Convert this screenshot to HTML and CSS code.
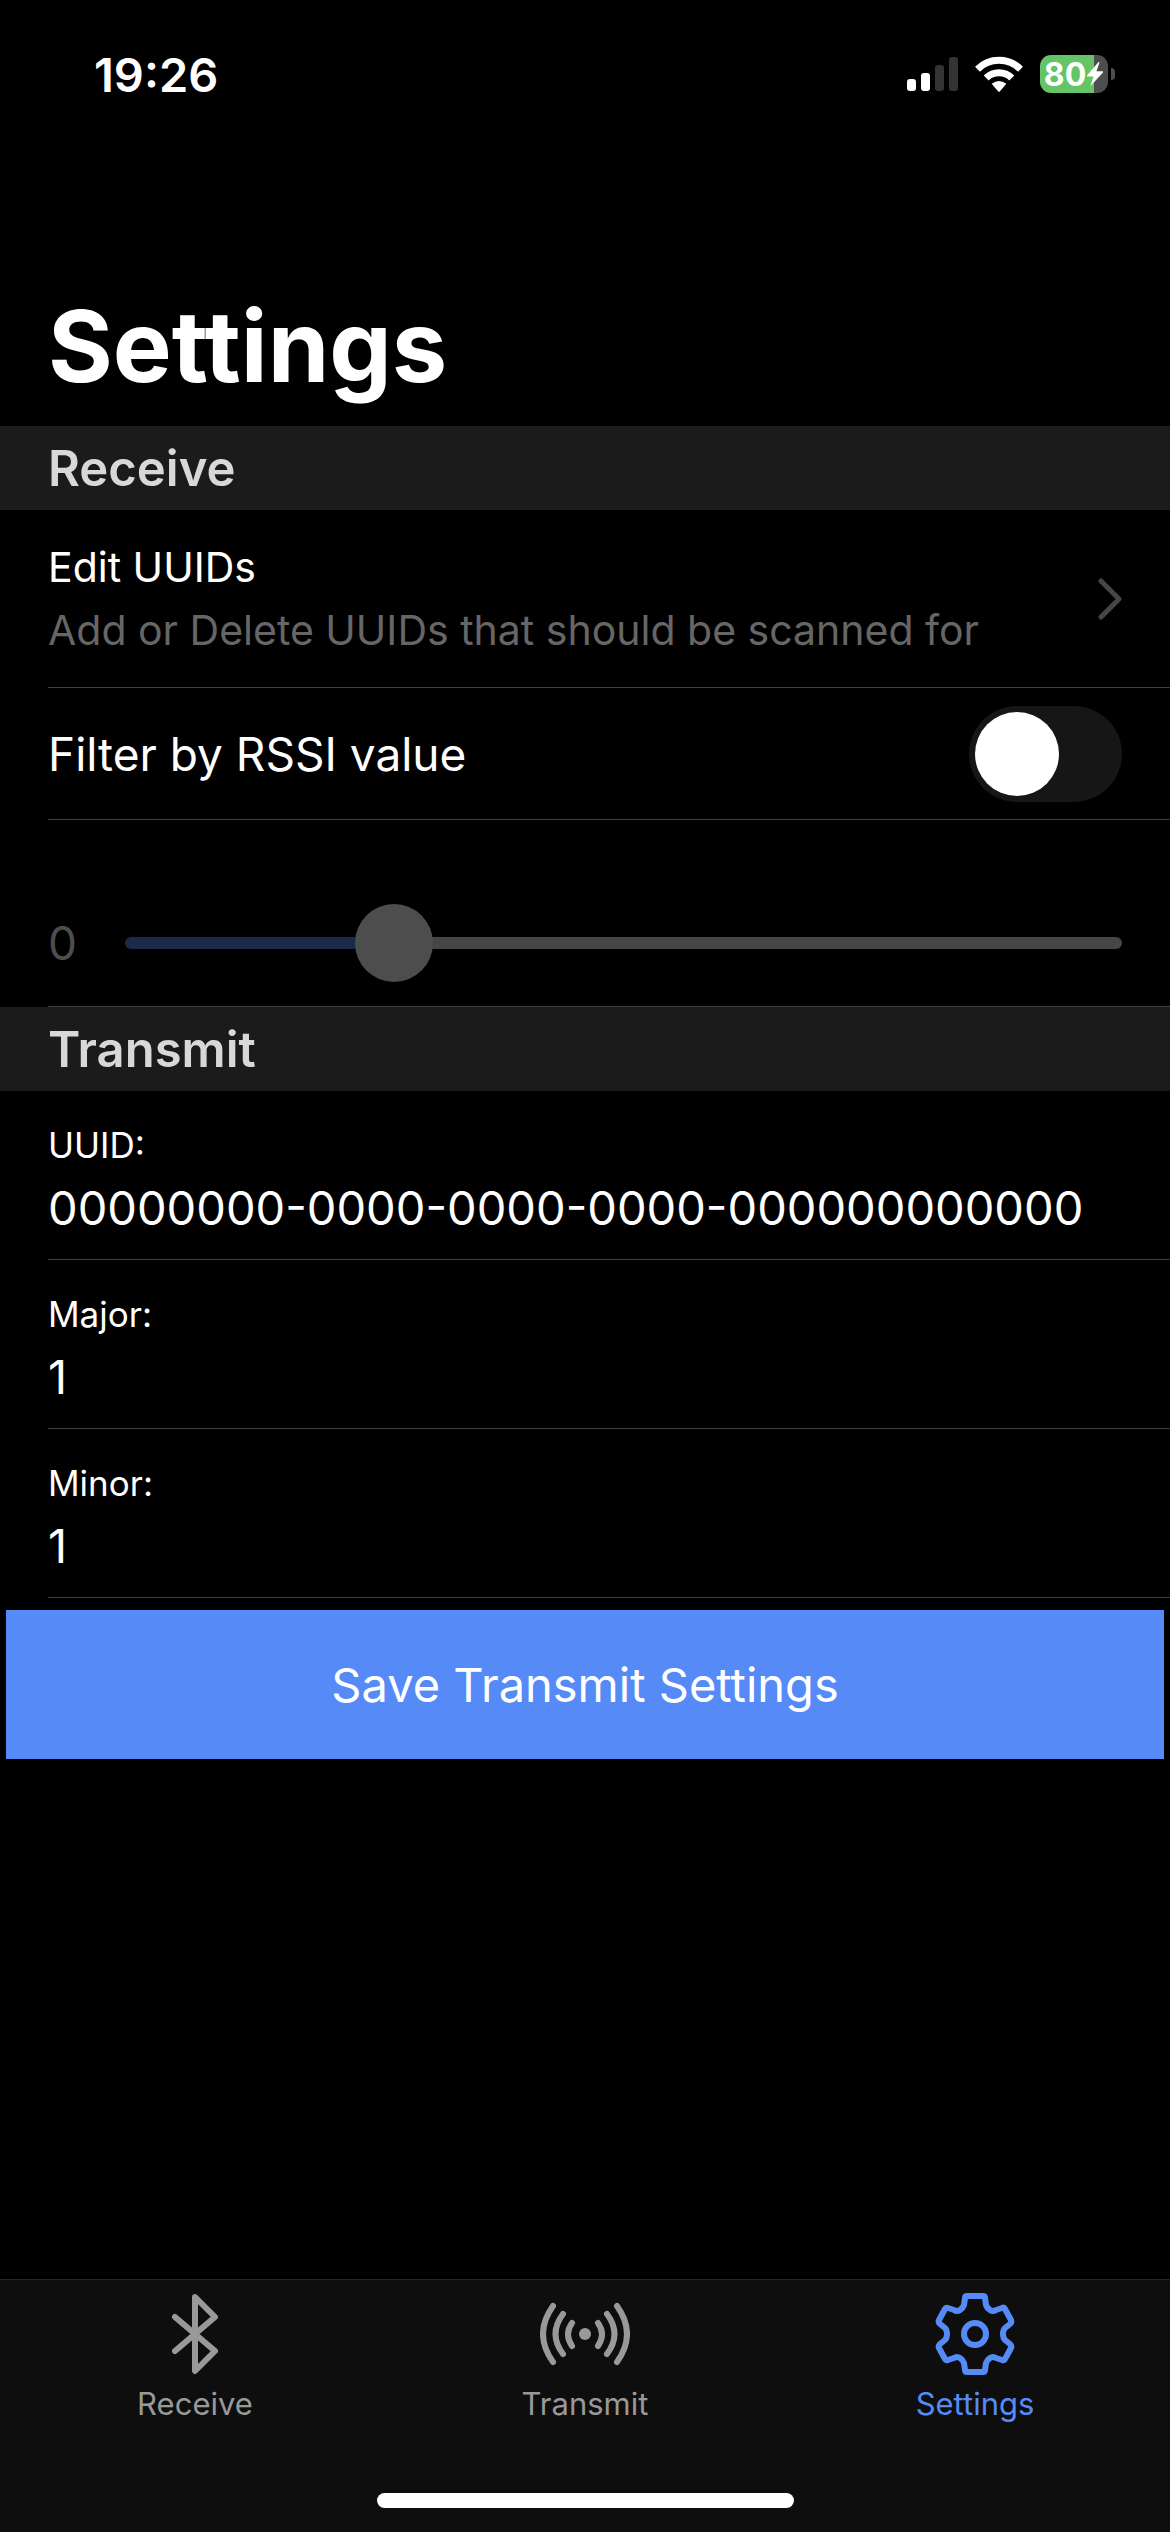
FILE: index.html
```html
<!DOCTYPE html>
<html lang="en">
<head>
<meta charset="utf-8">
<meta name="viewport" content="width=device-width, initial-scale=1">
<title>Settings</title>
<link rel="stylesheet" href="styles.css">
</head>
<body>
<div class="status-bar">
  <span class="clock">19:26</span>
  <div class="indicators">
    <svg class="signal" width="52" height="34" viewBox="0 0 52 34" aria-hidden="true">
      <g fill="#fff"><rect y="22" width="9" height="12" rx="3"/><rect x="14" y="16" width="9" height="18" rx="3"/></g>
      <g fill="#333"><rect x="28" y="8" width="9" height="26" rx="3"/><rect x="42" width="9" height="34" rx="3"/></g>
    </svg>
    <svg class="wifi" width="50" height="38" viewBox="0 0 50 38" aria-hidden="true">
      <g fill="none" stroke="#fff" stroke-width="7">
        <path d="M3.500 14.200A30.500 30.500 0 0 1 46.500 14.200"/>
        <path d="M12.200 23A18.500 18.500 0 0 1 37.800 23"/>
      </g>
      <path fill="#fff" d="M17.700 28.800Q25 23.200 32.300 28.800L26 36.200Q25 37.200 24 36.200Z"/>
    </svg>
    <div class="battery">
      <div class="battery-body"><span>80</span>
        <svg width="18" height="26" viewBox="0 0 18 26" aria-hidden="true"><path fill="#fff" d="M12.500 1L1 14.500Q0.500 15.500 1.700 15.500H7.500L4.500 25L17 11.500Q17.500 10.300 16.300 10.300H10.500L13.500 1.500Z"/></svg>
      </div>
      <span class="battery-tip"></span>
    </div>
  </div>
</div>
<main class="content">
  <h1 class="title">Settings</h1>
  <section>
    <h2 class="section-header">Receive</h2>
    <a class="row link-row" href="#uuids">
      <span class="link-text"><span class="link-title">Edit UUIDs</span><span class="link-detail">Add or Delete UUIDs that should be scanned for</span></span>
      <svg width="26" height="44" viewBox="0 0 26 44" aria-hidden="true"><path d="M5 4L23 22L5 40" fill="none" stroke="#464646" stroke-width="5" stroke-linecap="round" stroke-linejoin="round"/></svg>
    </a>
    <div class="row switch-row">
      <label for="rssi-filter">Filter by RSSI value</label>
      <input class="switch" id="rssi-filter" type="checkbox" role="switch">
    </div>
    <div class="row slider-row">
      <label for="rssi">0</label>
      <input class="slider" id="rssi" type="range" min="0" max="100" value="25" disabled>
    </div>
  </section>
  <form>
    <h2 class="section-header">Transmit</h2>
    <div class="row field-row"><label for="uuid">UUID:</label><input id="uuid" type="text" value="00000000-0000-0000-0000-000000000000"></div>
    <div class="row field-row"><label for="major">Major:</label><input id="major" type="text" value="1"></div>
    <div class="row field-row"><label for="minor">Minor:</label><input id="minor" type="text" value="1"></div>
    <button class="save" type="button">Save Transmit Settings</button>
  </form>
</main>
<footer class="tab-bar">
  <nav class="tabs">
    <a class="tab" href="#receive">
      <svg width="90" height="84" viewBox="0 0 90 84" fill="none" stroke="currentColor" stroke-width="6" stroke-linecap="round" stroke-linejoin="round" aria-hidden="true"><path d="M25 25L65 59L45 79V5L65 25L25 59"/></svg>
      Receive</a>
    <a class="tab" href="#transmit">
      <svg width="90" height="84" viewBox="0 0 90 84" fill="none" stroke="currentColor" stroke-width="6" stroke-linecap="round" aria-hidden="true">
        <circle cx="45" cy="42" r="6" fill="currentColor" stroke="none"/>
        <path d="M32 31Q24 42 32 54M23 22Q8 42 23 62M13 14Q-7 42 13 70M58 31Q66 42 58 54M67 22Q82 42 67 62M77 14Q97 42 77 70"/>
      </svg>
      Transmit</a>
    <a class="tab active" href="#settings" aria-current="page">
      <svg width="90" height="84" viewBox="0 0 90 84" fill="none" stroke="currentColor" stroke-width="6" stroke-linejoin="round" aria-hidden="true">
        <circle cx="45" cy="42" r="11"/>
        <path d="M37 4H53Q55 4 55 6L56 13Q57 16 60 18Q63 20 66 18L72 16Q74 15 75 17L81 28Q82 30 80 32L75 36Q73 38 73 42Q73 46 75 48L80 52Q82 54 81 56L75 67Q74 69 72 68L66 66Q63 64 60 66Q57 68 56 71L55 78Q55 80 53 80H37Q35 80 35 78L34 71Q33 68 30 66Q27 64 24 66L18 68Q16 69 15 67L9 56Q8 54 10 52L15 48Q17 46 17 42Q17 38 15 36L10 32Q8 30 9 28L15 17Q16 15 18 16L24 18Q27 20 30 18Q33 16 34 13L35 6Q35 4 37 4Z"/>
      </svg>
      Settings</a>
  </nav>
  <div class="home-indicator"></div>
</footer>
</body>
</html>
```
FILE: styles.css
```css
* { box-sizing: border-box; }

body {
  margin: 0;
  min-height: 100vh;
  display: flex;
  flex-direction: column;
  background: #000;
  color: #fff;
  font-family: Inter, "Liberation Sans", sans-serif;
  font-size: 46px;
}

a { color: inherit; text-decoration: none; }

.status-bar {
  display: flex;
  justify-content: space-between;
  align-items: center;
  height: 148px;
  padding: 0 55px 0 94px;
}
.clock { font-size: 47px; font-weight: 600; }
.indicators { display: flex; align-items: center; }
.signal { margin-right: 15px; }
.wifi { margin-right: 16px; }
.battery { display: flex; align-items: center; gap: 3px; }
.battery-body {
  display: flex;
  align-items: center;
  justify-content: center;
  width: 68px;
  height: 38px;
  border-radius: 11px;
  background: linear-gradient(to right, #65c466 54px, #4d4d4d 54px);
  font-size: 32px;
  font-weight: 700;
}
.battery-tip { width: 4px; height: 12px; border-radius: 0 4px 4px 0; background: #4d4d4d; }

.content { flex: 1; }
.title {
  margin: 0;
  padding: 138px 48px 20px;
  font-size: 99px;
  line-height: 120px;
  font-weight: 700;
}
.section-header {
  margin: 0;
  padding: 2px 48px 0;
  background: #1b1b1b;
  color: #d8d8d8;
  font-size: 49px;
  line-height: 82px;
  font-weight: 600;
}

.row {
  display: flex;
  margin-left: 48px;
  padding-right: 48px;
  border-bottom: 1px solid #404040;
}
.link-row {
  align-items: center;
  justify-content: space-between;
  height: 178px;
  font-size: 41px;
}
.link-text { display: flex; flex-direction: column; gap: 13px; line-height: 50px; }
.link-detail { color: #666; }
.switch-row { align-items: center; justify-content: space-between; height: 132px; }
.switch {
  appearance: none;
  width: 153px;
  height: 96px;
  margin: 0;
  padding: 6px;
  border-radius: 48px;
  background: #161616;
}
.switch::before {
  content: "";
  display: block;
  width: 84px;
  height: 84px;
  border-radius: 50%;
  background: #fff;
}
.switch:checked { background: #568bf7; }
.switch:checked::before { margin-left: auto; }

.slider-row { align-items: center; gap: 48px; height: 187px; padding-top: 60px; color: #4d4d4d; }
.slider { appearance: none; flex: 1; height: 78px; margin: 0; background: transparent; }
.slider::-webkit-slider-runnable-track {
  height: 12px;
  border-radius: 6px;
  background: linear-gradient(to right, #1a2a4b 27%, #464646 27%);
}
.slider::-webkit-slider-thumb {
  appearance: none;
  width: 78px;
  height: 78px;
  margin-top: -33px;
  border-radius: 50%;
  background: #4d4d4d;
}

.field-row { flex-direction: column; height: 169px; padding-top: 32px; }
.field-row label { font-size: 35px; line-height: 44px; }
.field-row input {
  width: 100%;
  height: 80px;
  padding: 0;
  border: 0;
  outline: 0;
  background: transparent;
  color: inherit;
  font: inherit;
  font-size: 47px;
}
.save {
  display: block;
  width: calc(100% - 12px);
  height: 149px;
  margin: 12px 6px 0;
  border: 0;
  background: #568bf7;
  color: #fff;
  font: inherit;
  font-size: 47px;
}

.tab-bar { border-top: 1px solid #262626; background: #0e0e0e; }
.tabs { display: flex; }
.tab {
  flex: 1;
  display: flex;
  flex-direction: column;
  align-items: center;
  gap: 10px;
  padding-top: 12px;
  color: #999;
  font-size: 31px;
  line-height: 36px;
}
.active { color: #568bf7; }
.home-indicator {
  width: 417px;
  height: 15px;
  margin: 71px auto 24px;
  border-radius: 8px;
  background: #fff;
}
```
